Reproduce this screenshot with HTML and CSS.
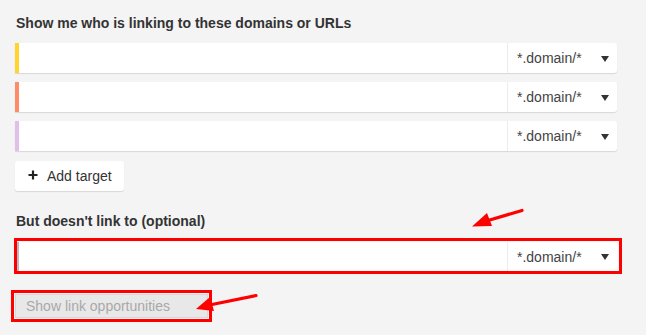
FILE: index.html
```html
<!DOCTYPE html>
<html>
<head>
<meta charset="utf-8">
<link rel="stylesheet" href="styles.css">
</head>
<body>
<div class="page">
  <h3 class="title">Show me who is linking to these domains or URLs</h3>
  <div class="rows">
    <div class="row"><span class="bar yellow"></span><div class="field"></div><div class="mode">*.domain/*<span class="caret"></span></div></div>
    <div class="row"><span class="bar orange"></span><div class="field"></div><div class="mode">*.domain/*<span class="caret"></span></div></div>
    <div class="row"><span class="bar lilac"></span><div class="field"></div><div class="mode">*.domain/*<span class="caret"></span></div></div>
  </div>
  <button class="add"><svg class="plus" width="10" height="10" viewBox="0 0 10 10"><path d="M5 0.5V9.5M0.5 5H9.5" stroke="#222" stroke-width="2.2"/></svg>Add target</button>
  <h3 class="title second">But doesn't link to (optional)</h3>
  <div class="mark wide">
    <div class="row excl"><span class="bar grey"></span><div class="field"></div><div class="mode mode-excl">*.domain/*<span class="caret"></span></div></div>
  </div>
  <div class="mark-btn">
    <button class="submit" disabled>Show link opportunities</button>
  </div>
  <svg class="arrows" width="646" height="335" viewBox="0 0 646 335">
    <line x1="522" y1="210.5" x2="488" y2="220.5" stroke="#f00" stroke-width="3.2" stroke-linecap="round"/>
    <polygon points="472,226.5 487,213 492,226" fill="#f00"/>
    <line x1="256" y1="295.5" x2="212" y2="304.5" stroke="#f00" stroke-width="3.2" stroke-linecap="round"/>
    <polygon points="196,309 210,297 214,311" fill="#f00"/>
  </svg>
</div>
</body>
</html>
```

FILE: styles.css
```css
html, body {
  margin: 0;
  padding: 0;
  background: #f4f4f4;
}
.page {
  position: relative;
  width: 646px;
  height: 335px;
  padding: 15px 0 0 15px;
  box-sizing: border-box;
  font-family: "Liberation Sans", Arial, sans-serif;
  color: #333;
}
.title {
  margin: 0 0 0 1px;
  font-size: 14px;
  line-height: 16px;
  font-weight: bold;
  color: #333;
}
.rows {
  display: flex;
  flex-direction: column;
  gap: 9px;
  margin-top: 12px;
  width: 602px;
}
.row {
  display: flex;
  height: 30px;
  background: #fff;
  border-radius: 0 3px 3px 0;
  box-shadow: 0 1px 1px rgba(0,0,0,0.12);
}
.bar {
  width: 4px;
  flex: none;
}
.yellow { background: #ffd42c; }
.orange { background: #ff8c69; }
.lilac { background: #e0c0e8; }
.grey { background: #b0bcc6; width: 2px; }
.field {
  flex: 1;
}
.mode {
  width: 110px;
  flex: none;
  box-sizing: border-box;
  border-left: 1px solid #ececec;
  display: flex;
  align-items: center;
  justify-content: space-between;
  padding: 0 8px 0 9px;
  font-size: 14px;
  color: #444;
}
.mode-excl {
  width: 111px;
  padding-right: 9px;
}
.caret {
  width: 0;
  height: 0;
  border-left: 4px solid transparent;
  border-right: 4px solid transparent;
  border-top: 6px solid #333;
  margin-top: 1px;
}
.add {
  display: flex;
  align-items: center;
  margin-top: 10px;
  height: 30px;
  width: 109px;
  padding: 0 0 0 13px;
  border: none;
  border-radius: 3px;
  background: #fff;
  box-shadow: 0 1px 1px rgba(0,0,0,0.12);
  font-family: "Liberation Sans", Arial, sans-serif;
  font-size: 14px;
  color: #333;
}
.plus {
  margin-right: 9px;
  margin-top: -3px;
}
.second {
  margin-top: 22px;
}
.mark {
  margin-top: 9px;
  margin-left: -1px;
  width: 601px;
  border: 3px solid #f00;
  padding: 1px 1px 0 0;
  box-sizing: content-box;
}
.excl {
  height: 29px;
  box-shadow: none;
}
.mark-btn {
  margin-top: 16px;
  margin-left: -4px;
  width: 193px;
  border: 3px solid #f00;
  padding: 1px;
}
.submit {
  display: block;
  width: 193px;
  height: 24px;
  margin: 0;
  border: 1px solid #d8d8d8;
  background: #e8e8e8;
  font-family: "Liberation Sans", Arial, sans-serif;
  font-size: 14px;
  color: #a8a8a8;
  padding: 0 0 0 10px;
  text-align: left;
}
.arrows {
  position: absolute;
  left: 0;
  top: 0;
  pointer-events: none;
}
```
